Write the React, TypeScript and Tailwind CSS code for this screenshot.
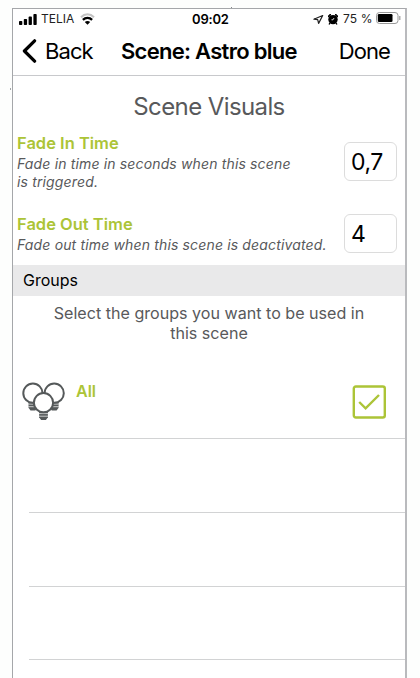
import React, { useState } from "react";

const settings = [
  {
    id: "fade-in",
    title: "Fade In Time",
    description: "Fade in time in seconds when this scene\nis triggered.",
    spacing: "h-[81px]",
    inputSpacing: "mt-[9px]",
  },
  {
    id: "fade-out",
    title: "Fade Out Time",
    description: "Fade out time when this scene is deactivated.",
    spacing: "h-[51px]",
    inputSpacing: "mt-0",
  },
];

function SignalIcon() {
  return (
    <svg width="18" height="11" viewBox="0 0 18 11" fill="black">
      <rect x="0" y="7" width="3.3" height="4" rx="0.8" />
      <rect x="4.8" y="5" width="3.3" height="6" rx="0.8" />
      <rect x="9.6" y="2.6" width="3.3" height="8.4" rx="0.8" />
      <rect x="14.4" y="0" width="3.3" height="11" rx="0.8" />
    </svg>
  );
}

function WifiIcon() {
  return (
    <svg width="15" height="12" viewBox="0 0 15 12" fill="none" strokeWidth="2">
      <path d="M1 4.2C4.7 0.4 10.3 0.4 14 4.2" stroke="#c4c4c4" />
      <path d="M2.9 6.9C5.5 4.3 9.5 4.3 12.1 6.9" stroke="black" strokeWidth="2.3" />
      <path d="M4.8 9C6.3 7.6 8.7 7.6 10.2 9L7.5 11.7Z" fill="black" />
    </svg>
  );
}

function AlarmIcon() {
  return (
    <svg width="10" height="11" viewBox="0 0 10 11">
      <circle cx="5" cy="5.6" r="4.7" fill="black" />
      <path d="M0.5 3A2 2 0 0 1 3 0.6ZM9.5 3A2 2 0 0 0 7 0.6Z" fill="black" stroke="black" strokeWidth="1" />
      <path d="M1.9 9L1.1 10.5M8.1 9L8.9 10.5" stroke="black" strokeWidth="1.4" />
      <path d="M6 4L5 5.8H3.5" fill="none" stroke="white" strokeWidth="0.8" />
    </svg>
  );
}

function StatusBar() {
  return (
    <div className="flex h-5 items-center pl-[6px] pr-[4px] text-[12px] leading-5 text-[#222]">
      <div className="flex w-[173px] items-center">
        <SignalIcon />
        <span className="ml-1 w-[35px]">TELIA</span>
        <span className="ml-[4px]">
          <WifiIcon />
        </span>
      </div>
      <span className="w-[40px] text-[13px] font-semibold tracking-[-0.2px] text-black">09:02</span>
      <div className="ml-auto flex items-center">
        <svg width="11" height="11" viewBox="0 0 11 11" fill="none" stroke="#222" strokeWidth="1.2" strokeLinejoin="round">
          <path d="M9.7 1.5L0.9 5.2L4.7 5.7L5.6 9.4Z" />
        </svg>
        <span className="ml-[4px]">
          <AlarmIcon />
        </span>
        <span className="ml-[5px] w-[30px] whitespace-nowrap tracking-[0.15px]">75 %</span>
        <svg className="relative -top-px ml-[3px]" width="25" height="12" viewBox="0 0 25 12">
          <rect x="0.5" y="0.5" width="21.5" height="11" rx="3" fill="none" stroke="#999" />
          <rect x="1.8" y="2" width="14.7" height="8" rx="1.3" fill="black" />
          <path d="M23.8 4V8" stroke="#999" strokeWidth="1.2" />
        </svg>
      </div>
    </div>
  );
}

function NavBar() {
  return (
    <header className="flex h-[47px] items-center border-b border-[#c8c9cc] pb-[2px] pl-[9px] pr-[15px] text-[22px] leading-7 text-black">
      <button className="flex w-[99px] items-center">
        <svg width="16" height="24" viewBox="0 0 16 24" fill="none" stroke="black" strokeWidth="3.2" strokeLinecap="round" strokeLinejoin="round">
          <path d="M12.6 1.8L2.4 12L12.6 22.2" />
        </svg>
        <span className="ml-[7px] tracking-[-0.9px]">Back</span>
      </button>
      <h1 className="whitespace-nowrap font-semibold tracking-[-0.72px]">Scene: Astro blue</h1>
      <button className="ml-auto tracking-[-0.9px]">Done</button>
    </header>
  );
}

function BulbShape({ x, y }: { x: number; y: number }) {
  return (
    <g transform={`translate(${x} ${y})`} stroke="#55595a" fill="white">
      <path d="M-4.4 8.5V14.6L-2.4 17.3H2.4L4.4 14.6V8.5Z" fill="#55595a" stroke="none" />
      <path d="M-4.6 10.9H4.6M-4.6 13.5H4.6" stroke="white" strokeWidth="0.7" />
      <circle cx="0" cy="0" r="9.6" strokeWidth="2" />
    </g>
  );
}

function BulbsIcon() {
  return (
    <svg width="44" height="39" viewBox="0 0 44 39">
      <BulbShape x={10.9} y={11.2} />
      <BulbShape x={32.2} y={11.2} />
      <BulbShape x={21.5} y={20.7} />
    </svg>
  );
}

export default function App() {
  const [values, setValues] = useState<Record<string, string>>({
    "fade-in": "0,7",
    "fade-out": "4",
  });
  const [checked, setChecked] = useState(true);

  return (
    <div className="relative h-[678px] w-[420px] overflow-hidden bg-[#fdfefd] pl-3 pt-2 font-['Inter','Liberation_Sans',sans-serif]">
      {/* Small ticks outside the frame */}
      <span className="absolute left-[231px] top-[7px] h-px w-px bg-[#8a8c8f]" />
      <span className="absolute left-[10px] top-[88px] h-[2px] w-px bg-[#a5a7aa]" />

      <div className="h-[670px] w-[395px] overflow-hidden border-l border-r-2 border-t border-l-[#a5a7aa] border-r-[#b9babd] border-t-[#a5a7aa] bg-white">
        <StatusBar />
        <NavBar />

        <h2 className="mt-[15px] text-center text-[24px] leading-8 tracking-[-0.6px] text-[#58595b]">Scene Visuals</h2>

        <section className="mt-[10px] pl-1">
          {settings.map((s) => (
            <div key={s.id} className={`flex justify-between pr-2 ${s.spacing}`}>
              <div className="w-[312px]">
                <h3 className="text-[16.5px] font-semibold leading-5 text-[#acc437]">{s.title}</h3>
                <p className="mt-[2px] whitespace-pre-line text-[14px] italic leading-[18px] tracking-[0.15px] text-[#58595b]">
                  {s.description}
                </p>
              </div>
              <input
                className={`h-[39px] w-[53px] rounded-md border border-[#dcdcdc] pl-[6px] text-[23px] tracking-[-0.5px] text-black outline-none ${s.inputSpacing}`}
                value={values[s.id]}
                onChange={(e) => setValues({ ...values, [s.id]: e.target.value })}
              />
            </div>
          ))}
        </section>

        <h3 className="h-[31px] bg-[#e9e9ea] pl-[10px] text-[16px] leading-[31px] text-black">Groups</h3>
        <p className="mx-auto mt-[7px] w-[330px] text-center text-[16.1px] leading-5 text-[#58595b]">
          Select the groups you want to be used in this scene
        </p>

        {/* Selectable group row */}
        <div className="mt-[39px] flex h-[56px] items-start pl-[9px] pr-[19px]">
          <BulbsIcon />
          <span className="-mt-px ml-[10px] text-[16px] font-semibold leading-5 text-[#acc437]">All</span>
          <button className="ml-auto mt-[3px]" onClick={() => setChecked(!checked)}>
            <svg width="34" height="34" viewBox="0 0 34 34" fill="none" stroke="#acc437">
              <rect x="1.8" y="1.5" width="31" height="31" rx="2" strokeWidth="2.4" />
              {checked && <path d="M7.2 17L13.6 23.3L27 10" strokeWidth="2.4" />}
            </svg>
          </button>
        </div>

        {/* Empty list rows */}
        <div className="ml-4 h-[74px] border-t border-[#d2d3d4]" />
        <div className="ml-4 h-[74px] border-t border-[#d2d3d4]" />
        <div className="ml-4 h-[73px] border-t border-[#d2d3d4]" />
        <div className="ml-4 h-5 border-t border-[#d2d3d4]" />
      </div>
    </div>
  );
}
